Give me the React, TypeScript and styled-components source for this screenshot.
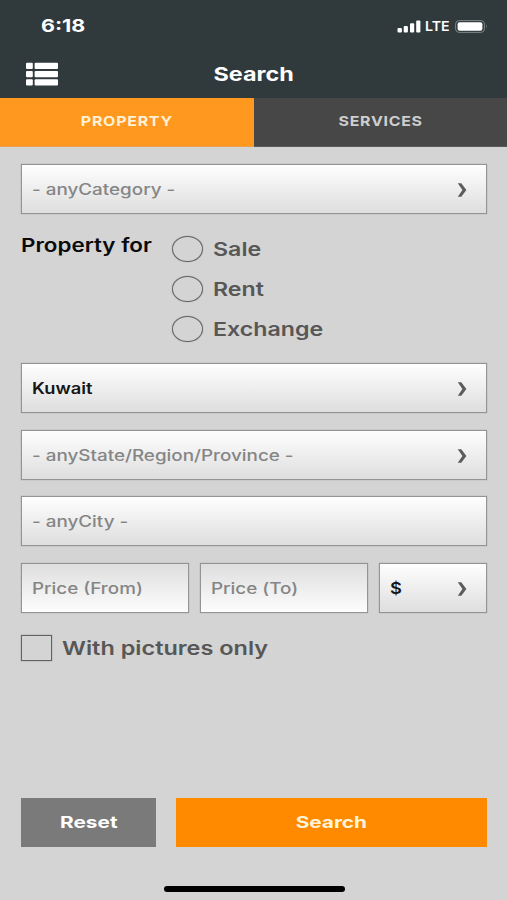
import React from 'react';
import styled, { createGlobalStyle } from 'styled-components';

const GlobalStyle = createGlobalStyle`
  *, *::before, *::after { box-sizing: border-box; }
  body { margin: 0; background: #d4d4d4; }
`;

const Screen = styled.div`
  display: flex;
  flex-direction: column;
  width: 507px;
  height: 900px;
  overflow: hidden;
  background: #d4d4d4;
  font-family: Inter, 'Liberation Sans', sans-serif;
`;

const Text = styled.span<{
  $size: number;
  $weight?: number;
  $color: string;
  $stretch?: number;
  $origin?: string;
  $spacing?: number;
}>`
  display: inline-block;
  white-space: nowrap;
  font-size: ${(p) => p.$size}px;
  font-weight: ${(p) => p.$weight ?? 600};
  line-height: 24px;
  color: ${(p) => p.$color};
  letter-spacing: ${(p) => p.$spacing ?? 0}px;
  transform: scaleX(${(p) => p.$stretch ?? 1.2});
  transform-origin: ${(p) => p.$origin ?? 'left'} center;
`;

const StatusBar = styled.div`
  display: flex;
  align-items: center;
  justify-content: space-between;
  height: 52px;
  padding: 0 19px 0 41px;
  background: #30393c;
`;

const StatusIcons = styled.div`
  display: flex;
  align-items: center;
  height: 24px;
`;

const Carrier = styled.div`
  width: 30px;
  margin-left: 4px;
  height: 24px;
`;

const Header = styled.header`
  display: grid;
  grid-template-columns: 80px 1fr 80px;
  align-items: center;
  height: 46px;
  padding-bottom: 2px;
  background: #30393c;
`;

const MenuButton = styled.button`
  display: flex;
  width: 34px;
  height: 24px;
  margin-left: 25px;
  padding: 0;
  border: 0;
  background: none;
`;

const Title = styled.h1`
  display: flex;
  justify-content: center;
  margin: 0;
  padding-top: 2px;
`;

const Tabs = styled.nav`
  display: flex;
  height: 49px;
`;

const Tab = styled.button<{ $active?: boolean }>`
  display: flex;
  justify-content: center;
  flex: 1;
  padding: 11px 0 0;
  border: 0;
  border-bottom: 1px solid ${(p) => (p.$active ? '#f0a04a' : '#5a5a5a')};
  background: ${(p) => (p.$active ? '#ff981f' : '#474747')};
  font-family: inherit;
`;

const Form = styled.main`
  display: flex;
  flex-direction: column;
  flex: 1;
  padding: 17px 20px 0 21px;
`;

const Field = styled.div<{ $inset?: boolean; $width?: number }>`
  display: flex;
  align-items: center;
  justify-content: space-between;
  width: ${(p) => (p.$width ? `${p.$width}px` : '100%')};
  height: 50px;
  padding: 2px 18px 0 10px;
  border: 1px solid #949494;
  box-shadow: 0 0 1px #949494;
  background: ${(p) =>
    p.$inset
      ? 'linear-gradient(#dedede, #fdfdfd)'
      : 'linear-gradient(#fefefe, #dedede)'};
`;

const FieldStack = styled.div`
  display: grid;
  row-gap: 16.6px;
`;

const PriceRow = styled.div`
  display: flex;
  justify-content: space-between;
`;

const RadioGroup = styled.div`
  display: flex;
  height: 149px;
  padding-top: 20px;
`;

const GroupLabel = styled.div`
  width: 151px;
  flex: none;
  margin-top: -1px;
`;

const Options = styled.div`
  display: flex;
  flex-direction: column;
  gap: 14px;
  padding-top: 2px;
`;

const Option = styled.label`
  display: flex;
  align-items: center;
  gap: 10px;
  height: 26px;
`;

const OptionText = styled.span`
  display: flex;
  padding-top: 2px;
`;

const Radio = styled.span`
  width: 31px;
  height: 26px;
  border: 1px solid #626262;
  border-radius: 50%;
  box-shadow: 0 0 1px #757575;
`;

const Checkbox = styled.span`
  width: 31px;
  height: 26px;
  border: 1px solid #626262;
  box-shadow: 0 0 1px #757575;
`;

const CheckRow = styled(Option)`
  margin-top: 22px;
`;

const Actions = styled.footer`
  display: flex;
  gap: 20px;
  height: 49px;
  padding: 0 20px 0 21px;
`;

const ActionButton = styled.button<{ $primary?: boolean }>`
  display: flex;
  align-items: center;
  justify-content: center;
  flex: ${(p) => (p.$primary ? '1' : '0 0 135px')};
  padding: 0 0 1px;
  border: 0;
  background: ${(p) => (p.$primary ? '#ff8a00' : '#7a7a7a')};
  font-family: inherit;
`;

const HomeArea = styled.div`
  display: flex;
  justify-content: center;
  height: 53px;
  padding: 39px 0 0 1px;
`;

const HomeIndicator = styled.div`
  width: 181px;
  height: 6px;
  border-radius: 3px;
  background: #000;
`;

const Chevron = () => (
  <svg width="11" height="16" viewBox="0 0 11 16">
    <path d="M0.8 1.2 H4.3 L9.4 8 L4.3 14.8 H0.8 L5.4 8 Z" fill="#5c5c5c" />
  </svg>
);

const MenuIcon = () => (
  <svg width="34" height="24" viewBox="0 0 34 24" fill="#fff">
    {[0.8, 9, 17.2].map((y) => (
      <g key={y}>
        <rect x="1" y={y} width="6.8" height="6.2" rx="1" />
        <rect x="9.6" y={y} width="23.4" height="6.2" rx="1" />
      </g>
    ))}
  </svg>
);

const SignalIcon = () => (
  <svg width="24" height="13" viewBox="0 0 24 13" fill="#fff">
    <rect x="0.5" y="8" width="4.4" height="4.6" rx="1" />
    <rect x="6.7" y="6" width="4.2" height="6.6" rx="1" />
    <rect x="13" y="3.2" width="4.2" height="9.4" rx="1" />
    <rect x="19.2" y="0.4" width="4.2" height="12.2" rx="1" />
  </svg>
);

const BatteryIcon = () => (
  <svg width="33" height="13" viewBox="0 0 33 13">
    <rect x="0.6" y="0.6" width="28.8" height="11.8" rx="3.5" fill="none" stroke="#7e8587" />
    <rect x="2.6" y="2.2" width="24.8" height="8.6" rx="2" fill="#fff" />
    <path d="M31 4.3 Q32.7 6.5 31 8.7 Z" fill="#7e8587" />
  </svg>
);

const FieldText = ({ children, dark }: { children: string; dark?: boolean }) => (
  <Text
    $size={15.5}
    $color={dark ? '#161616' : '#858585'}
    $weight={dark ? 600 : 550}
    $stretch={dark ? 1.18 : 1.215}
  >
    {children}
  </Text>
);

export default function App() {
  return (
    <>
      <GlobalStyle />
      <Screen>
        <StatusBar>
          <Text $size={17.3} $weight={700} $color="#fff" $stretch={1.24}>6:18</Text>
          <StatusIcons>
            <SignalIcon />
            <Carrier>
              <Text $size={13.5} $color="#fff" $stretch={1.05}>LTE</Text>
            </Carrier>
            <BatteryIcon />
          </StatusIcons>
        </StatusBar>
        <Header>
          <MenuButton aria-label="Menu"><MenuIcon /></MenuButton>
          <Title>
            <Text $size={19} $weight={700} $color="#fff" $origin="center" $stretch={1.23}>Search</Text>
          </Title>
        </Header>
        <Tabs>
          <Tab $active>
            <Text $size={13.5} $weight={700} $color="#fff1d6" $origin="center" $stretch={1.185} $spacing={0.6}>PROPERTY</Text>
          </Tab>
          <Tab>
            <Text $size={13.5} $weight={700} $color="#cecece" $origin="center" $stretch={1.18} $spacing={0.6}>SERVICES</Text>
          </Tab>
        </Tabs>
        <Form>
          <Field><FieldText>- anyCategory -</FieldText><Chevron /></Field>
          <RadioGroup>
            <GroupLabel>
              <Text $size={18.5} $color="#0a0a0a" $stretch={1.21}>Property for</Text>
            </GroupLabel>
            <Options>
              {['Sale', 'Rent', 'Exchange'].map((name) => (
                <Option key={name}>
                  <Radio />
                  <OptionText>
                    <Text $size={19} $color="#575757" $stretch={1.22}>{name}</Text>
                  </OptionText>
                </Option>
              ))}
            </Options>
          </RadioGroup>
          <FieldStack>
            <Field><FieldText dark>Kuwait</FieldText><Chevron /></Field>
            <Field><FieldText>- anyState/Region/Province -</FieldText><Chevron /></Field>
            <Field><FieldText>- anyCity -</FieldText></Field>
            <PriceRow>
              <Field $inset $width={168}><FieldText>Price (From)</FieldText></Field>
              <Field $inset $width={168}><FieldText>Price (To)</FieldText></Field>
              <Field $width={108}><FieldText dark>$</FieldText><Chevron /></Field>
            </PriceRow>
          </FieldStack>
          <CheckRow>
            <Checkbox />
            <OptionText>
              <Text $size={19} $color="#575757" $stretch={1.235}>With pictures only</Text>
            </OptionText>
          </CheckRow>
        </Form>
        <Actions>
          <ActionButton>
            <Text $size={16.5} $weight={700} $color="#fff" $origin="center" $stretch={1.26}>Reset</Text>
          </ActionButton>
          <ActionButton $primary>
            <Text $size={16.5} $weight={700} $color="#fff3d8" $origin="center" $stretch={1.26}>Search</Text>
          </ActionButton>
        </Actions>
        <HomeArea><HomeIndicator /></HomeArea>
      </Screen>
    </>
  );
}
